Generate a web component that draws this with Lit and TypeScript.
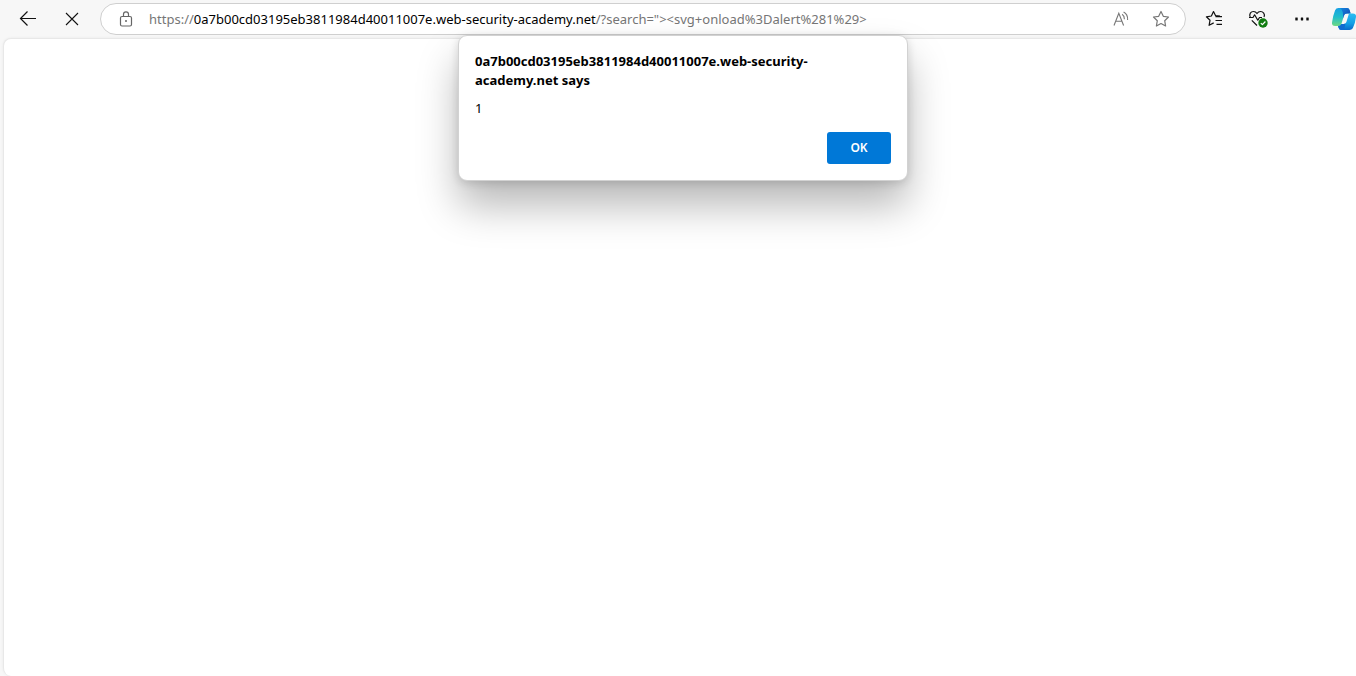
import { LitElement, html, css } from "lit";
import { customElement, state } from "lit/decorators.js";

@customElement("app-root")
export class AppRoot extends LitElement {
  static styles = css`
    :host {
      display: flex;
      flex-direction: column;
      position: relative;
      min-height: 100vh;
      overflow: hidden;
      background: #f7f7f7;
      color: #000;
      font-family: "Noto Sans", "Open Sans", sans-serif;
      font-size: 13px;
      line-height: 18px;
    }
    * {
      box-sizing: border-box;
    }
    svg {
      display: block;
      flex: none;
      fill: none;
    }
    button {
      font: inherit;
      margin: 0;
      padding: 0;
      border: 0;
      background: none;
      color: inherit;
    }
    .toolbar {
      display: flex;
      align-items: center;
      height: 38px;
      padding-left: 6px;
    }
    .tool {
      display: flex;
      align-items: center;
      justify-content: center;
      flex: none;
      width: 44px;
      height: 32px;
    }
    .copilot {
      justify-content: flex-end;
      width: 32px;
    }
    .address {
      display: flex;
      align-items: center;
      flex: 1;
      min-width: 0;
      height: 32px;
      margin: 0 6px;
      padding: 0 4px 0 16px;
      border: 1px solid #cfcfcf;
      border-radius: 16px;
      background: #fff;
      color: #767676;
    }
    .site,
    .action {
      display: flex;
      align-items: center;
      justify-content: center;
      flex: none;
      width: 40px;
      height: 28px;
    }
    .site {
      width: 18px;
    }
    .url {
      flex: 1;
      min-width: 0;
      margin-left: 14px;
      overflow: hidden;
      white-space: nowrap;
      outline: none;
    }
    .host {
      color: #000;
    }
    .page {
      flex: 1;
      margin-left: 3px;
      border: 1px solid #e8e8e8;
      border-width: 1px 0 0 1px;
      border-radius: 8px 0 0 8px;
      background: #fff;
      box-shadow: 0 0 3px #0000000f;
    }
    .layer {
      position: absolute;
      inset: 35px 0 auto 10px;
      display: flex;
      justify-content: center;
    }
    .dialog {
      display: flex;
      flex-direction: column;
      width: 450px;
      padding: 16px;
      border: 1px solid #d2d2d2;
      border-radius: 9px;
      background: #fff;
      box-shadow: 0 25px 40px #00000047, 0 2px 10px #00000024;
    }
    .title {
      margin: 0;
      padding-right: 16px;
      font-size: 13px;
      line-height: 19px;
      font-weight: 700;
    }
    .message {
      margin: 9px 0 15px;
    }
    .ok {
      align-self: flex-end;
      width: 64px;
      height: 32px;
      border-radius: 3px;
      background: #0078d7;
      color: #fff;
      font-size: 12px;
      font-weight: 600;
    }
  `;

  @state() private open = true;

  private close = () => {
    this.open = false;
  };

  render() {
    return html`
      <nav class="toolbar" aria-label="Browser toolbar">
        <button class="tool" aria-label="Back">
          <svg width="18" height="18" viewBox="0 0 18 18" stroke="#111" stroke-width="1.2">
            <path d="M17 8.5H1.5M8.5 1.5l-7 7 7 7" />
          </svg>
        </button>
        <button class="tool" aria-label="Stop">
          <svg width="14" height="14" viewBox="0 0 14 14" stroke="#111" stroke-width="1.1">
            <path d="M1 1l12 12M13 1L1 13" />
          </svg>
        </button>
        <div class="address">
          <button class="site" aria-label="Site information">
            <svg width="14" height="16" viewBox="0 0 14 16" stroke="#666" stroke-width="1.2">
              <rect x="1.5" y="5.5" width="11" height="9.5" rx="1.5" />
              <path d="M4.5 5.5V3.3a2.5 2.5 0 0 1 5 0v2.2" />
              <circle cx="7" cy="10" r="1" fill="#666" stroke="none" />
            </svg>
          </button>
          <div class="url" role="textbox" aria-label="Address" contenteditable="true" spellcheck="false"><span>https://</span><span class="host">0a7b00cd03195eb3811984d40011007e.web-security-academy.net</span><span>/?search="&gt;&lt;svg+onload%3Dalert%281%29&gt;</span></div>
          <button class="action" aria-label="Read aloud">
            <svg width="16" height="16" viewBox="0 0 16 16" stroke="#777" stroke-width="1.1">
              <path d="M1 14.500L5.800 2.200l4.800 12.300M2.800 10.200h6M9.100 3.300q2.300 1.400 2.300 5M10.600 1q4.400 2.300 4 8" />
            </svg>
          </button>
          <button class="action" aria-label="Add to favorites">
            <svg width="18" height="18" viewBox="0 0 18 18" stroke="#777" stroke-width="1.2" stroke-linejoin="round">
              <path d="M9 1.500l2.300 4.800 5.200.7-3.800 3.700.9 5.300L9 13.500 4.400 16l.9-5.300L1.500 7l5.200-.7z" />
            </svg>
          </button>
        </div>
        <button class="tool" aria-label="Favorites">
          <svg width="18" height="18" viewBox="0 0 18 18" stroke="#111" stroke-width="1.2" stroke-linejoin="round">
            <path d="M15 6.200l-4.400-.5L8.500 1.600 6.400 6l-5 .8 3.600 3.500-.9 5 4.600-2.400M10.500 6.700H17M10.500 10.500H17M11.500 14.300H17" />
          </svg>
        </button>
        <button class="tool" aria-label="Browser essentials">
          <svg width="20" height="18" viewBox="0 0 20 18" stroke="#111" stroke-width="1.2" stroke-linejoin="round">
            <path d="M2.300 7.500C.6 4 3 1.500 5.500 1.500c1.700 0 2.800.9 3.500 2 .7-1.100 1.800-2 3.500-2 2.500 0 4.900 2.500 3.500 5.500M1 7.500h4l1.600-2.700 3.200 5.400 1.700-2.700H14M3.800 10.300L9 15.500" />
            <circle cx="15" cy="13" r="4.700" fill="#107c10" stroke="none" />
            <path d="M12.800 13.100l1.600 1.600 3-3.200" stroke="#fff" />
          </svg>
        </button>
        <button class="tool" aria-label="Settings and more">
          <svg width="16" height="4" viewBox="0 0 16 4">
            <path d="M1.500 .8h2v2.400h-2zM7 .8h2v2.400H7zM12.500 .8h2v2.400h-2z" fill="#111" stroke="#111" stroke-width=".4" stroke-linejoin="round" />
          </svg>
        </button>
        <button class="tool copilot" aria-label="Copilot">
          <svg width="24" height="24" viewBox="0 0 24 24">
            <defs>
              <linearGradient id="left" x1="0" y1="0" x2="0" y2="1">
                <stop offset="0" stop-color="#169fe4" />
                <stop offset=".5" stop-color="#20bdcb" />
                <stop offset="1" stop-color="#70d982" />
              </linearGradient>
              <linearGradient id="top" x1="0" y1="0" x2="1" y2="1">
                <stop offset="0" stop-color="#1289e0" />
                <stop offset="1" stop-color="#173fae" />
              </linearGradient>
              <linearGradient id="right" x1="0" y1="0" x2="0" y2="1">
                <stop offset="0" stop-color="#2bbdf2" />
                <stop offset=".6" stop-color="#139fe5" />
                <stop offset="1" stop-color="#086acb" />
              </linearGradient>
            </defs>
            <path d="M6.500 1H15q2 0 2.600 2l1 3.500H15q-2.500 0-3.200 2.400L9.400 17Q8.800 19 6.600 19H3Q-.5 19 0 15.500 .8 9 3.100 3.200 4 1 6.500 1z" fill="url(#left)" />
            <path d="M8 1h7q2 0 2.600 2l1 3.500H15q-2.500 0-3.200 2.400L11 11.500Q11.500 3 8 1z" fill="url(#top)" />
            <path d="M17 6.500h4Q24.500 6.500 24 10q-.8 6.500-3.200 11.200Q19.600 23 17.500 23H9.300q-2 0-2.600-2L6 18.900q2.700.1 3.400-2h2.400q2 0 2.600-2l2.100-7q.3-1 .5-1.400z" fill="url(#right)" />
            <path d="M6 18.900q2.700.1 3.400-2h2.400q1.200 0 1.800-.6L12 23H9.300q-2 0-2.600-2z" fill="#0f6bd0" />
          </svg>
        </button>
      </nav>
      <main class="page"></main>
      ${this.open
        ? html`<div class="layer">
            <section class="dialog" role="alertdialog" aria-labelledby="title" aria-describedby="message">
              <h1 class="title" id="title">0a7b00cd03195eb3811984d40011007e.web-security-academy.net says</h1>
              <p class="message" id="message">1</p>
              <button class="ok" @click=${this.close}>OK</button>
            </section>
          </div>`
        : null}
    `;
  }
}
